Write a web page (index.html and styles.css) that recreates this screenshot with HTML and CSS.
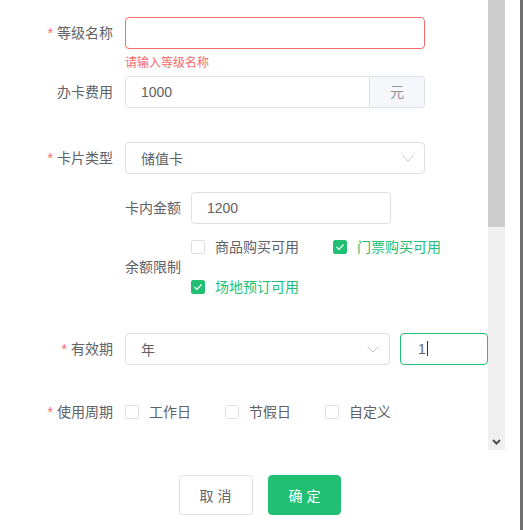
FILE: index.html
```html
<!DOCTYPE html>
<html>
<head>
    <title>新增会员等级</title>
    <link rel="stylesheet" href="styles.css">
</head>
<body>
    <div class="dialog">
        <div class="main">
            <div class="scroll">
                <!-- Form -->
                <form class="form">
                    <div class="item has-error">
                        <label class="label required">等级名称</label>
                        <div class="content">
                            <input class="input" type="text" />
                            <div class="error">请输入等级名称</div>
                        </div>
                    </div>

                    <div class="item gap-fee">
                        <label class="label">办卡费用</label>
                        <div class="content group">
                            <input class="input" type="text" value="1000" />
                            <span class="append">元</span>
                        </div>
                    </div>

                    <div class="item gap-type">
                        <label class="label required">卡片类型</label>
                        <div class="content select">
                            <input class="input" type="text" value="储值卡" readonly />
                            <svg class="arrow" width="12" height="7" viewBox="0 0 12 7"><polyline points="0.5,0.5 6,6 11.5,0.5" fill="none" stroke="#c0c4cc" stroke-width="1"/></svg>
                        </div>
                    </div>

                    <div class="sub">
                        <div class="item">
                            <label class="sub-label">卡内金额</label>
                            <input class="input amount" type="text" value="1200" />
                        </div>
                        <div class="item limit">
                            <label class="sub-label">余额限制</label>
                            <div class="checks">
                                <div class="check-line">
                                    <span class="check"><span class="box"></span>商品购买可用</span>
                                    <span class="check checked"><span class="box"><svg width="10" height="8" viewBox="0 0 10 8"><polyline points="1.5,4 4,6.5 8.5,1.5" fill="none" stroke="#fff" stroke-width="1.2"/></svg></span>门票购买可用</span>
                                </div>
                                <div class="check-line">
                                    <span class="check checked"><span class="box"><svg width="10" height="8" viewBox="0 0 10 8"><polyline points="1.5,4 4,6.5 8.5,1.5" fill="none" stroke="#fff" stroke-width="1.2"/></svg></span>场地预订可用</span>
                                </div>
                            </div>
                        </div>
                    </div>

                    <div class="item gap-valid">
                        <label class="label required">有效期</label>
                        <div class="content select period">
                            <input class="input" type="text" value="年" readonly />
                            <svg class="arrow" width="12" height="7" viewBox="0 0 12 7"><polyline points="0.5,0.5 6,6 11.5,0.5" fill="none" stroke="#c0c4cc" stroke-width="1"/></svg>
                        </div>
                        <div class="input focus">1<span class="caret"></span></div>
                    </div>

                    <div class="item gap-cycle">
                        <label class="label required">使用周期</label>
                        <div class="content cycle">
                            <span class="check"><span class="box"></span>工作日</span>
                            <span class="check"><span class="box"></span>节假日</span>
                            <span class="check"><span class="box"></span>自定义</span>
                        </div>
                    </div>
                </form>

                <!-- Scrollbar -->
                <div class="scrollbar">
                    <div class="thumb"></div>
                    <div class="track"></div>
                    <div class="down">
                        <svg width="9" height="6" viewBox="0 0 9 6"><polyline points="1,1 4.5,4.5 8,1" fill="none" stroke="#505050" stroke-width="2"/></svg>
                    </div>
                </div>
            </div>

            <div class="footer">
                <button class="btn" type="button">取 消</button>
                <button class="btn primary" type="button">确 定</button>
            </div>
        </div>
        <div class="edge"></div>
    </div>
</body>
</html>
```

FILE: styles.css
```css
body {
    margin: 0;
    background: #fff;
    font-family: "Liberation Sans", "Noto Sans CJK SC", sans-serif;
    font-size: 14px;
    color: #606266;
    overflow: hidden;
}

.dialog {
    display: flex;
    width: 523px;
    height: 530px;
}

.main {
    width: 520px;
    display: flex;
    flex-direction: column;
}

.edge {
    width: 3px;
    background: #707070;
}

.scroll {
    display: flex;
    width: 505px;
    height: 450px;
}

.form {
    flex: 1;
    padding-top: 17px;
    margin: 0;
}

.item {
    display: flex;
    align-items: flex-start;
}

.label {
    width: 125px;
    box-sizing: border-box;
    padding-right: 12px;
    text-align: right;
    line-height: 32px;
    flex-shrink: 0;
}

.required::before {
    content: "*";
    color: #f56c6c;
    margin-right: 4px;
}

.content {
    width: 300px;
    position: relative;
}

.input {
    display: block;
    width: 100%;
    height: 32px;
    box-sizing: border-box;
    border: 1px solid #dcdfe6;
    border-radius: 4px;
    padding: 0 15px;
    font-family: inherit;
    font-size: 14px;
    color: #606266;
    background: #fff;
    outline: none;
}

.has-error .input {
    border-color: #f56c6c;
}

.error {
    color: #f56c6c;
    font-size: 12px;
    line-height: 14px;
    margin-top: 7px;
    margin-bottom: 6px;
}

/* spacing between rows */
.gap-fee { margin-bottom: 34px; }
.gap-type { margin-bottom: 18px; }
.gap-valid { margin-top: 26px; }
.gap-cycle { margin-top: 31px; }

.group {
    display: flex;
}

.group .input {
    border-radius: 4px 0 0 4px;
}

.append {
    width: 55px;
    flex-shrink: 0;
    box-sizing: border-box;
    border: 1px solid #dcdfe6;
    border-left: none;
    border-radius: 0 4px 4px 0;
    background: #f5f7fa;
    color: #909399;
    text-align: center;
    line-height: 30px;
}

.select .arrow {
    position: absolute;
    right: 11px;
    top: 13px;
}

.period {
    width: 265px;
}

.input.focus {
    width: 88px;
    margin-left: 10px;
    border-color: #20bf73;
    line-height: 30px;
    padding-left: 17px;
}

.caret {
    display: inline-block;
    width: 1px;
    height: 15px;
    background: #333;
    vertical-align: -2px;
    margin-left: 1px;
}

/* card amount sub form */
.sub {
    padding-left: 125px;
}

.sub-label {
    width: 66px;
    line-height: 32px;
    flex-shrink: 0;
}

.input.amount {
    width: 200px;
}

.limit {
    align-items: center;
    margin-top: 3px;
}

.check-line {
    display: flex;
    height: 40px;
    align-items: center;
}

.check {
    display: inline-flex;
    align-items: center;
    margin-right: 30px;
    line-height: 14px;
}

.check-line .check:first-child {
    width: 112px;
}

.box {
    width: 14px;
    height: 14px;
    box-sizing: border-box;
    border: 1px solid #dcdfe6;
    border-radius: 2px;
    margin-right: 10px;
    display: inline-flex;
    align-items: center;
    justify-content: center;
}

.checked {
    color: #20bf73;
}

.checked .box {
    background: #20bf73;
    border-color: #20bf73;
}

.cycle {
    display: flex;
    height: 32px;
    align-items: center;
}

.cycle .check {
    width: 101px;
    margin-right: 0;
}

/* scrollbar */
.scrollbar {
    width: 17px;
    display: flex;
    flex-direction: column;
}

.thumb {
    height: 227px;
    background: #cdcdcd;
}

.track {
    flex: 1;
    background: #f0f0f0;
}

.down {
    height: 17px;
    background: #f0f0f0;
    display: flex;
    align-items: center;
    justify-content: center;
}

/* footer buttons */
.footer {
    display: flex;
    justify-content: center;
    gap: 15px;
    padding-top: 25px;
}

.btn {
    height: 40px;
    padding: 0 20px;
    border: 1px solid #dcdfe6;
    border-radius: 4px;
    background: #fff;
    color: #606266;
    font-family: inherit;
    font-size: 14px;
    cursor: pointer;
}

.btn.primary {
    background: #20bf73;
    border-color: #20bf73;
    color: #fff;
}
```
